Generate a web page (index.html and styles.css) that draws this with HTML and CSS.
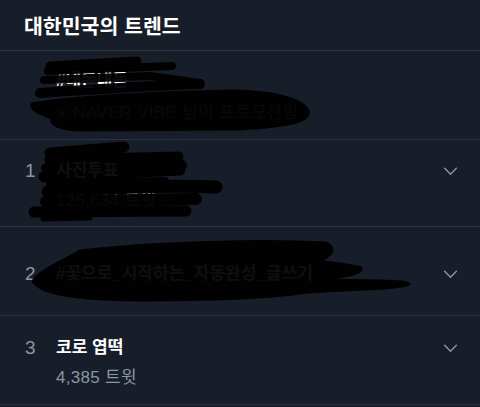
FILE: index.html
```html
<!DOCTYPE html>
<html lang="ko">
<head>
<meta charset="utf-8">
<link rel="stylesheet" href="styles.css">
</head>
<body>
<div class="page">
  <header class="header">
    <h1 class="title">대한민국의 트렌드</h1>
  </header>
  <ul class="trends">
    <li class="trend trend-promo">
      <div class="main">
        <span class="rank"></span>
        <div class="info">
          <div class="name">#내돈내듣</div>
          <div class="meta"><span class="promo">▣</span> NAVER VIBE 님이 프로모션함</div>
        </div>
      </div>
    </li>
    <li class="trend trend-short">
      <div class="main">
        <span class="rank">1</span>
        <div class="info">
          <div class="name">사진투표</div>
          <div class="meta">125,634 트윗</div>
        </div>
        <svg class="chev" viewBox="0 0 16 10" width="16" height="10"><path d="M1.5 1.5 L8 8 L14.5 1.5"/></svg>
      </div>
    </li>
    <li class="trend">
      <div class="main">
        <span class="rank">2</span>
        <div class="info">
          <div class="name">#꽃으로_시작하는_자동완성_글쓰기</div>
        </div>
        <svg class="chev" viewBox="0 0 16 10" width="16" height="10"><path d="M1.5 1.5 L8 8 L14.5 1.5"/></svg>
      </div>
    </li>
    <li class="trend">
      <div class="main">
        <span class="rank">3</span>
        <div class="info">
          <div class="name">코로 엽떡</div>
          <div class="meta">4,385 트윗</div>
        </div>
        <svg class="chev" viewBox="0 0 16 10" width="16" height="10"><path d="M1.5 1.5 L8 8 L14.5 1.5"/></svg>
      </div>
    </li>
  </ul>
  <svg class="scribble" viewBox="0 0 480 407" width="480" height="407">
    <g opacity="0.94" fill="#000" stroke="#000" stroke-linecap="round" stroke-linejoin="round">
      <path d="M50 66 L137 61" stroke-width="9" fill="none"/>
      <path d="M48 71 L172 66" stroke-width="8" fill="none"/>
      <path d="M44 80 L150 76 L200 83" stroke-width="8" fill="none"/>
      <path d="M40 93 C100 89 160 85 200 84" stroke-width="10" fill="none"/>
      <path d="M32 104 C60 98 150 92 230 91 C272 91 302 99 308 111 C310 121 292 126 240 129 L78 130 C58 129 50 124 52 118 C38 113 30 109 32 104 Z" stroke-width="3"/>
      <path d="M50 153 L124 147" stroke-width="11" fill="none"/>
      <path d="M50 160 L178 157" stroke-width="11" fill="none"/>
      <path d="M46 168 L182 165" stroke-width="10" fill="none"/>
      <path d="M44 177 L180 170" stroke-width="11" fill="none"/>
      <path d="M50 184 L165 181" stroke-width="8" fill="none"/>
      <path d="M48 192 C100 188 170 185 216 187" stroke-width="13" fill="none"/>
      <path d="M46 202 L196 199" stroke-width="12" fill="none"/>
      <path d="M34 212 L186 211" stroke-width="11" fill="none"/>
      <path d="M43 219 L90 218" stroke-width="5" fill="none"/>
      <path d="M33 281 C40 270 66 260 80 251 C150 243 260 239 326 243 C337 248 332 256 318 261 C340 264 356 266 361 268 C363 274 340 277 322 280 C360 281 402 280 409 284 C402 289 340 289 300 293 C250 300 150 301 102 299 C70 297 40 293 33 281 Z" stroke-width="3"/>
    </g>
  </svg>
</div>
</body>
</html>
```
FILE: styles.css
```css
* { box-sizing: border-box; }
html, body {
  margin: 0;
  padding: 0;
  background: #171e29;
}
body {
  font-family: "Liberation Sans", "Noto Sans CJK KR", sans-serif;
  color: #ffffff;
}
.page {
  position: relative;
  width: 480px;
  height: 407px;
  overflow: hidden;
}
.header {
  height: 51px;
  border-bottom: 1px solid #2c3440;
  display: flex;
  align-items: center;
  padding: 0 24px;
}
.title {
  margin: 0;
  font-size: 20.5px;
  font-weight: 700;
  font-family: "Noto Sans CJK KR", sans-serif;
}
.trends {
  list-style: none;
  margin: 0;
  padding: 0;
}
.trend {
  height: 89px;
  border-bottom: 1px solid #2c3440;
  display: flex;
  align-items: center;
  padding: 0 22px 0 25px;
}
.trend-short { height: 87px; }
.main {
  flex: 1;
  display: flex;
  align-items: flex-start;
  padding-top: 5px;
}
.rank {
  width: 31px;
  flex: none;
  font-size: 19px;
  line-height: 24px;
  color: #8a96a3;
}
.info {
  flex: 1;
  display: flex;
  flex-direction: column;
  gap: 6px;
}
.trend-promo .info { gap: 8px; }
.name {
  font-size: 17px;
  font-weight: 700;
  line-height: 24px;
  color: #ffffff;
}
.meta {
  font-size: 17px;
  line-height: 24px;
  letter-spacing: 0.3px;
  color: #8a96a3;
}
.promo { font-size: 12px; }
.chev {
  flex: none;
  width: 15px;
  height: 9px;
  margin-top: 8px;
  fill: none;
  stroke: #8a96a3;
  stroke-width: 1.6;
  stroke-linecap: round;
  stroke-linejoin: round;
}
.scribble {
  position: absolute;
  top: 0;
  left: 0;
  pointer-events: none;
}
```
